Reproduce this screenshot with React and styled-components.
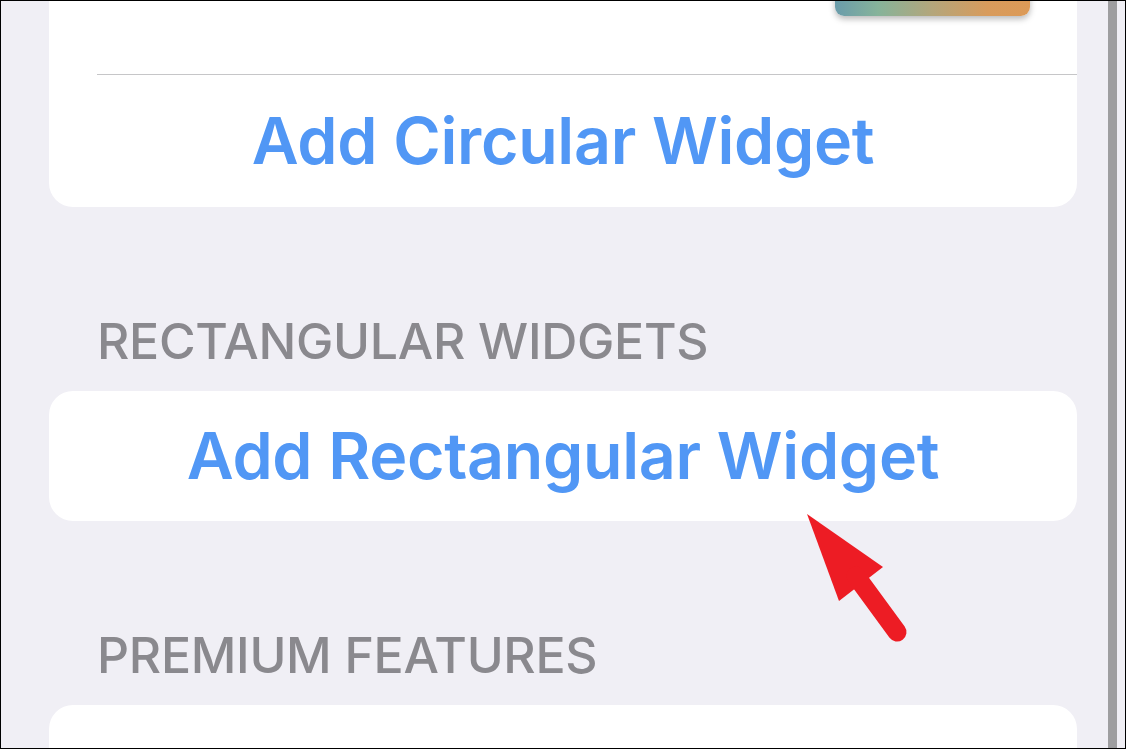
import React from "react";
import styled, { createGlobalStyle } from "styled-components";

const GlobalStyle = createGlobalStyle`
  html, body { margin: 0; padding: 0; }
  body { font-family: Inter, "Noto Sans", sans-serif; }
  * { box-sizing: border-box; }
`;

const Frame = styled.div`
  position: relative;
  width: 1126px;
  height: 749px;
  border: 1px solid #000;
  background: #f0eff5;
  overflow: hidden;
  display: flex;
`;

const Content = styled.main`
  flex: 0 0 1076px;
  padding-left: 48px;
  display: flex;
  flex-direction: column;
`;

const Card = styled.section`
  width: 1028px;
  flex: none;
  background: #fff;
  border-radius: 24px;
  margin-top: ${(p) => p.$mt || 0}px;
  min-height: ${(p) => p.$minH || 0}px;
  display: flex;
  flex-direction: column;
`;

const Preview = styled.div`
  height: 134px;
  display: flex;
  justify-content: flex-end;
  padding: 16px 47px 0 0;
`;

const WidgetImage = styled.div`
  width: 195px;
  height: 60px;
  border-radius: 9px;
  background: linear-gradient(90deg, #6a9cab 0%, #86b39a 22%, #b4a67b 50%, #d89b5c 78%, #dc9a57 100%);
  box-shadow: 0 3px 6px rgba(0, 0, 0, 0.28);
`;

const Separator = styled.hr`
  margin: 0 0 0 48px;
  border: 0;
  height: 1px;
  background: #c6c6c8;
`;

const ActionRow = styled.button`
  height: ${(p) => p.$h}px;
  border: 0;
  background: transparent;
  width: 100%;
  display: flex;
  align-items: center;
  justify-content: center;
  font-family: Inter, "Noto Sans", sans-serif;
  font-weight: 600;
  font-size: 64.5px;
  letter-spacing: -0.3px;
  color: #5197f5;
  padding: 0;
  cursor: pointer;
`;

const SectionHeader = styled.h2`
  margin: 104px 0 19px 0;
  padding-left: 48px;
  height: 61px;
  font-family: Inter, "Noto Sans", sans-serif;
  font-weight: 500;
  font-size: 50px;
  line-height: 61px;
  letter-spacing: -0.3px;
  color: #8a898e;
  text-transform: uppercase;
`;

const ScrollTrack = styled.div`
  flex: 1;
  display: flex;
  justify-content: flex-end;
  padding-right: 8px;
`;

const ScrollThumb = styled.div`
  width: 9px;
  height: 100%;
  background: #9e9ea0;
`;

const Arrow = styled.svg`
  position: absolute;
  left: 0;
  top: 0;
  pointer-events: none;
`;

export default function App() {
  return (
    <>
      <GlobalStyle />
      <Frame>
        <Content>
          <Card $mt={-61}>
            <Preview>
              <WidgetImage />
            </Preview>
            <Separator />
            <ActionRow $h={132}>Add Circular Widget</ActionRow>
          </Card>
          <SectionHeader>Rectangular Widgets</SectionHeader>
          <Card>
            <ActionRow $h={130}>Add Rectangular Widget</ActionRow>
          </Card>
          <SectionHeader>Premium Features</SectionHeader>
          <Card $minH={120} />
        </Content>
        <ScrollTrack>
          <ScrollThumb />
        </ScrollTrack>
        <Arrow width="1126" height="749" viewBox="0 0 1126 749">
          <polygon points="806,513 882,566 838,600" fill="#ed1c24" />
          <line x1="855" y1="575" x2="896" y2="631" stroke="#ed1c24" strokeWidth="19" strokeLinecap="round" />
        </Arrow>
      </Frame>
    </>
  );
}
